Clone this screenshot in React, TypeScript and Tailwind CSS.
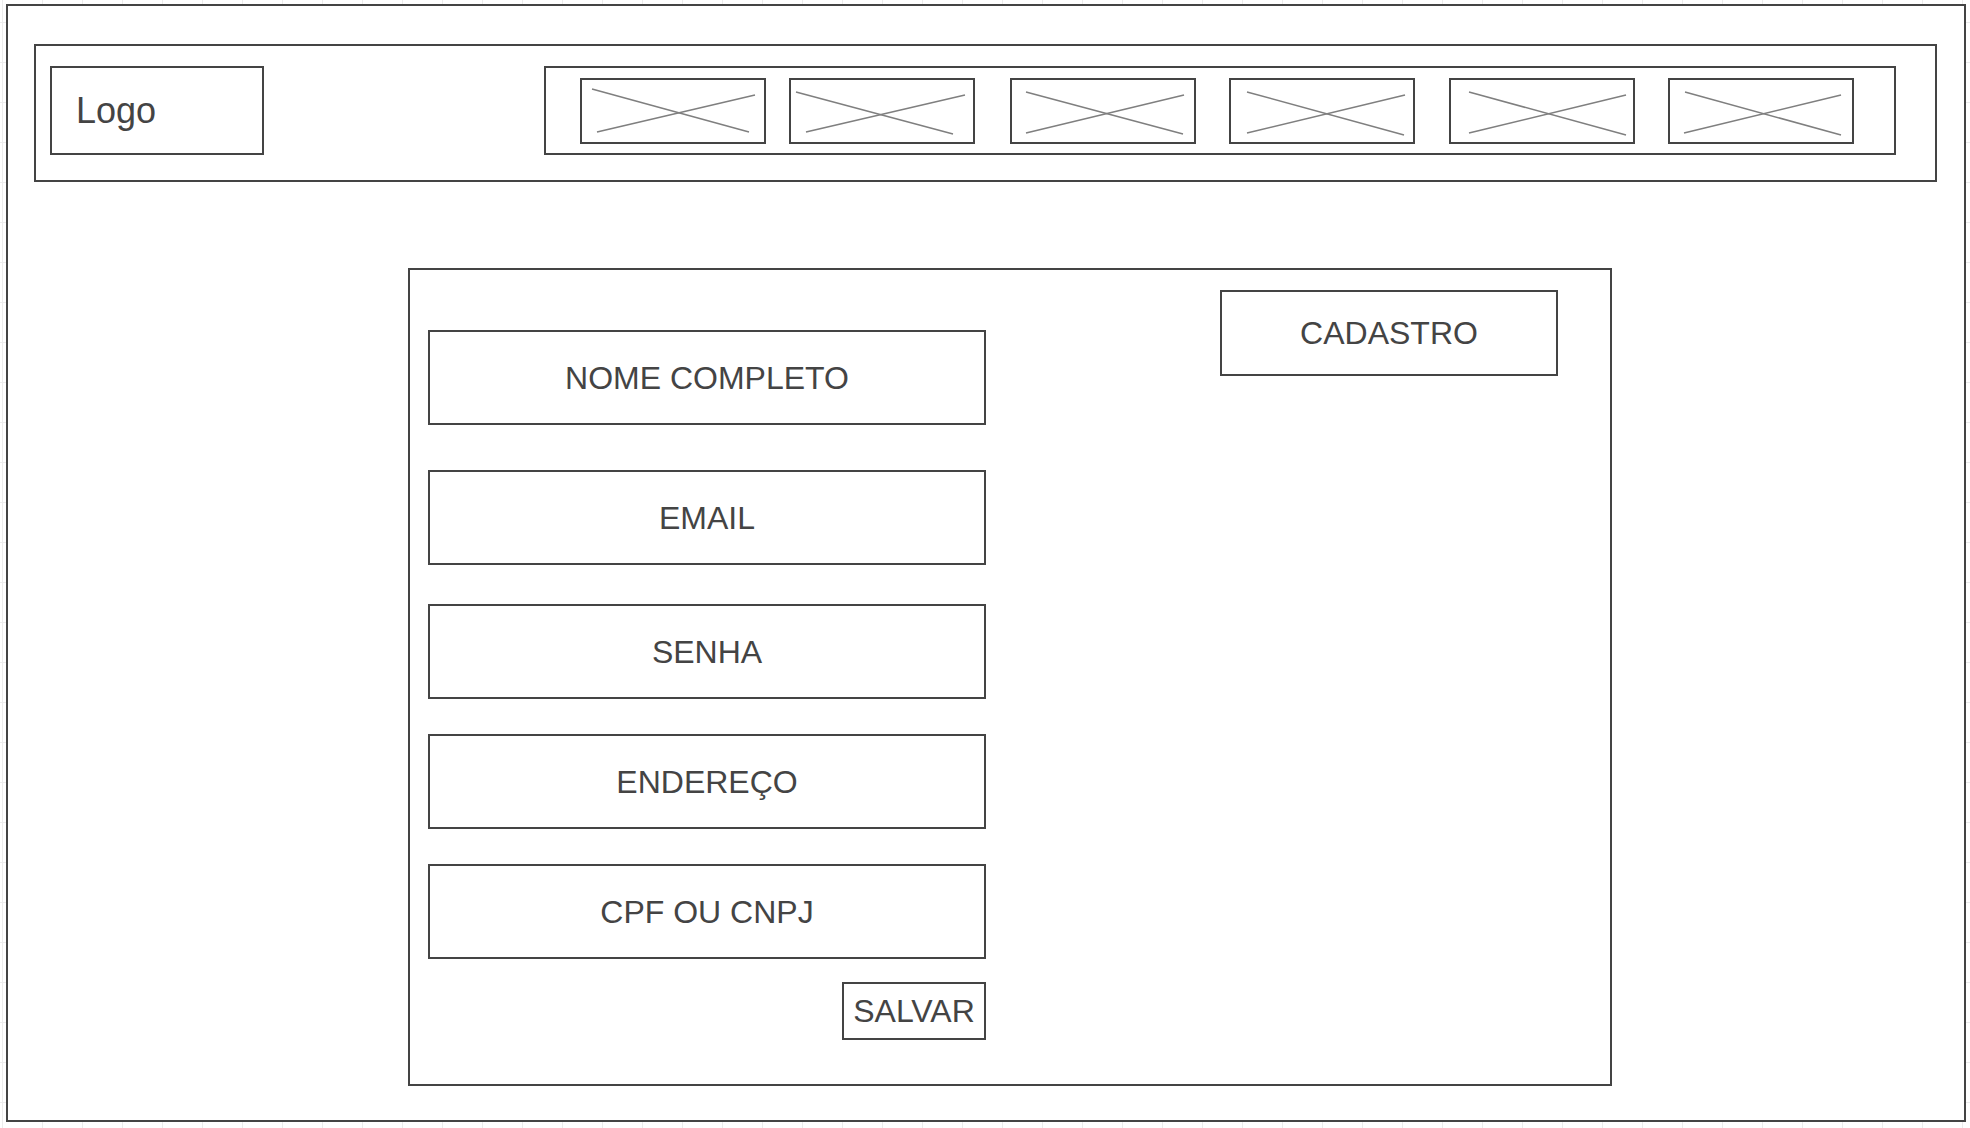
const navItems = [
  { ml: "ml-[34px]", a: [10, 9, 167, 52], b: [15, 52, 173, 15] },
  { ml: "ml-[23px]", a: [5, 12, 162, 54], b: [15, 52, 174, 15] },
  { ml: "ml-[35px]", a: [14, 12, 171, 54], b: [14, 53, 172, 15] },
  { ml: "ml-[33px]", a: [16, 12, 173, 55], b: [16, 53, 174, 15] },
  { ml: "ml-[34px]", a: [18, 12, 175, 55], b: [18, 53, 175, 15] },
  { ml: "ml-[33px]", a: [15, 12, 171, 55], b: [14, 53, 171, 15] },
];

const fields = [
  { label: "NOME COMPLETO", mt: "mt-[60px]" },
  { label: "EMAIL", mt: "mt-[45px]" },
  { label: "SENHA", mt: "mt-[39px]" },
  { label: "ENDEREÇO", mt: "mt-[35px]" },
  { label: "CPF OU CNPJ", mt: "mt-[35px]" },
];

function Placeholder({ a, b }: { a: number[]; b: number[] }) {
  return (
    <svg width="182" height="62" viewBox="0 0 182 62" className="block">
      <line x1={a[0]} y1={a[1]} x2={a[2]} y2={a[3]} stroke="#7f7f7f" strokeWidth="1.5" />
      <line x1={b[0]} y1={b[1]} x2={b[2]} y2={b[3]} stroke="#7f7f7f" strokeWidth="1.5" />
    </svg>
  );
}

export default function App() {
  return (
    <div className="h-[1128px] w-full overflow-hidden bg-white bg-[linear-gradient(to_right,#ececec_1px,transparent_1px),linear-gradient(to_bottom,#ececec_1px,transparent_1px)] bg-[size:40px_40px] bg-[position:2px_22px] pl-[6px] pt-[4px] font-['Liberation_Sans',Arial,sans-serif] text-[#444]">
      <div className="flex h-[1118px] w-[1960px] flex-col border-2 border-[#444] bg-white">
        {/* header */}
        <header className="ml-[26px] mt-[38px] flex h-[138px] w-[1903px] items-start border-2 border-[#444] pt-[20px]">
          <div className="ml-[14px] flex h-[89px] w-[214px] items-center border-2 border-[#444] pl-[24px] text-[36px] leading-none">
            Logo
          </div>
          <nav className="ml-[280px] flex h-[89px] w-[1352px] items-start border-2 border-[#444] pt-[10px]">
            {navItems.map((item, i) => (
              <div
                key={i}
                className={`${item.ml} h-[66px] w-[186px] shrink-0 border-2 border-[#444]`}
              >
                <Placeholder a={item.a} b={item.b} />
              </div>
            ))}
          </nav>
        </header>

        {/* cadastro form */}
        <section className="ml-[400px] mt-[86px] flex h-[818px] w-[1204px] items-start border-2 border-[#444]">
          <div className="ml-[18px] flex w-[558px] flex-col">
            {fields.map((f) => (
              <div
                key={f.label}
                className={`${f.mt} flex h-[95px] w-full items-center justify-center border-2 border-[#444] text-[32px] leading-none`}
              >
                {f.label}
              </div>
            ))}
            <button className="mt-[23px] flex h-[58px] w-[144px] items-center justify-center self-end border-2 border-[#444] text-[32px] leading-none">
              SALVAR
            </button>
          </div>
          <div className="ml-auto mr-[52px] mt-[20px] flex h-[86px] w-[338px] items-center justify-center border-2 border-[#444] text-[32px] leading-none">
            CADASTRO
          </div>
        </section>
      </div>
    </div>
  );
}
